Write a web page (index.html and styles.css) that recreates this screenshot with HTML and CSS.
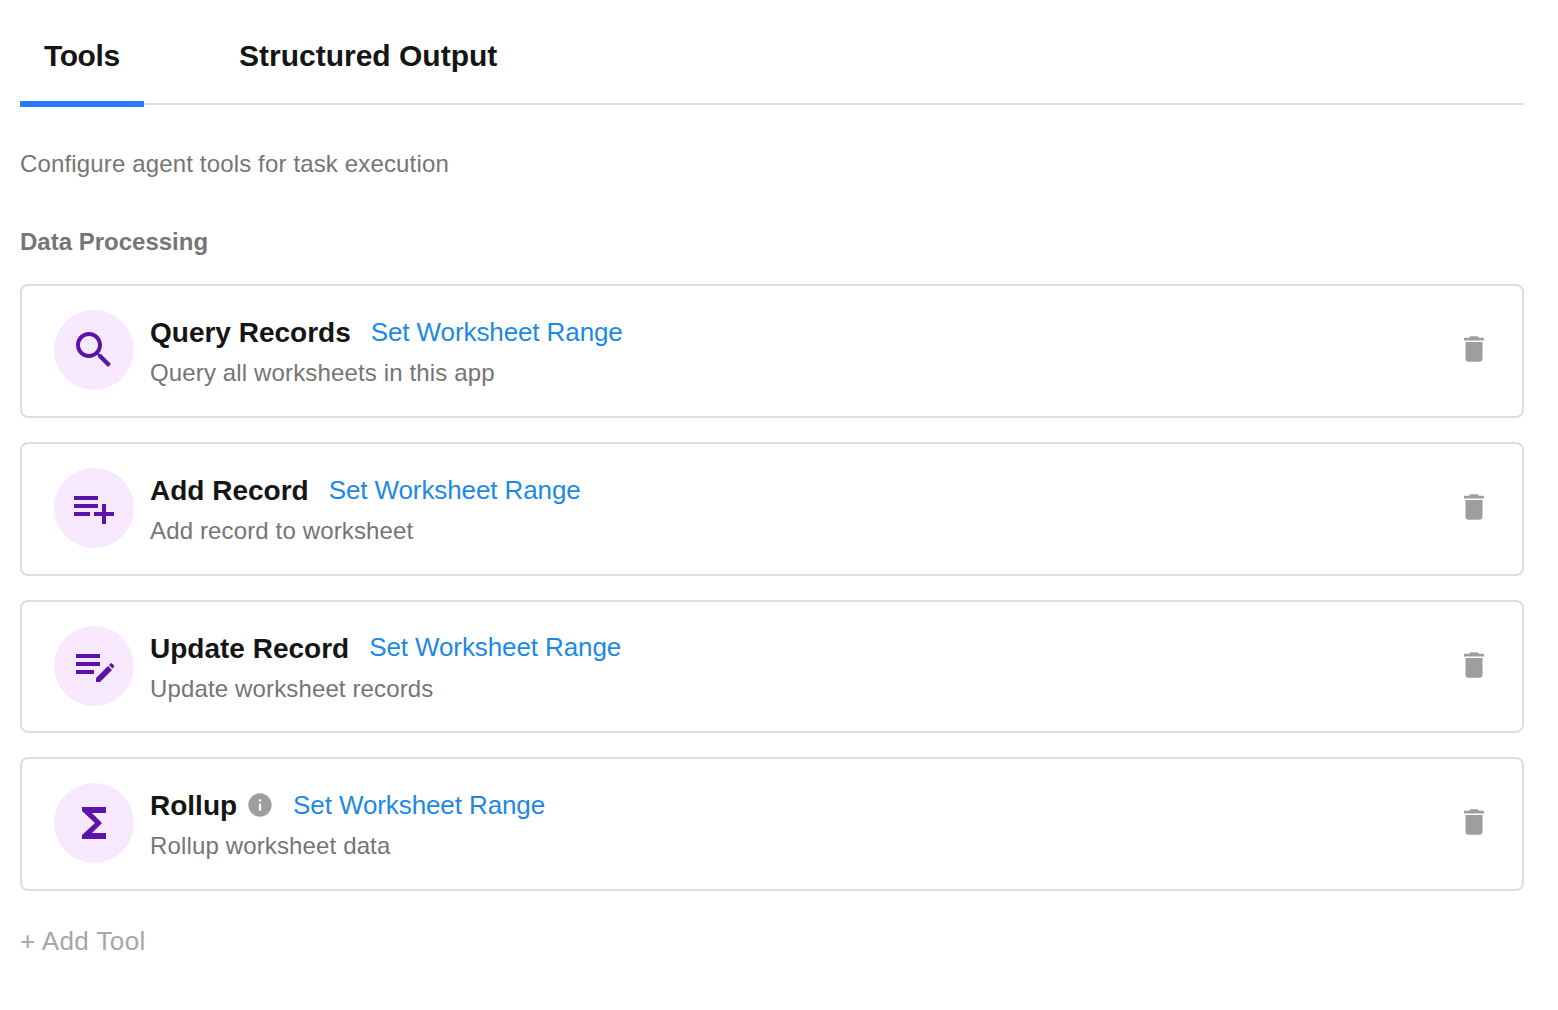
FILE: index.html
```html
<!DOCTYPE html>
<html lang="en">
  <head>
    <meta charset="UTF-8" />
    <title>Agent Tools</title>
    <link rel="stylesheet" href="styles.css">
  </head>
  <body>
    <div class="tabs">
      <div class="tab tab-active">Tools</div>
      <div class="tab">Structured Output</div>
    </div>

    <p class="intro">Configure agent tools for task execution</p>
    <h2 class="group-title">Data Processing</h2>

    <div class="tool-list">
      <div class="tool-card">
        <div class="tool-icon">
          <svg viewBox="0 0 24 24"><path d="M15.5 14h-.79l-.28-.27C15.41 12.59 16 11.11 16 9.5 16 5.91 13.09 3 9.5 3S3 5.91 3 9.5 5.91 16 9.5 16c1.61 0 3.09-.59 4.23-1.57l.27.28v.79l5 4.99L20.49 19l-4.99-5zm-6 0C7.01 14 5 11.99 5 9.5S7.01 5 9.5 5 14 7.01 14 9.5 11.99 14 9.5 14z"/></svg>
        </div>
        <div class="tool-body">
          <div class="tool-head">
            <span class="tool-name">Query Records</span>
            <a class="tool-link">Set Worksheet Range</a>
          </div>
          <div class="tool-desc">Query all worksheets in this app</div>
        </div>
        <svg class="tool-delete" viewBox="0 0 24 24"><path d="M6 19c0 1.1.9 2 2 2h8c1.1 0 2-.9 2-2V7H6v12zM19 4h-3.5l-1-1h-5l-1 1H5v2h14V4z"/></svg>
      </div>

      <div class="tool-card">
        <div class="tool-icon">
          <svg viewBox="0 0 24 24"><path d="M14 10H2v2h12v-2zm0-4H2v2h12V6zm4 8v-4h-2v4h-4v2h4v4h2v-4h4v-2h-4zM2 16h8v-2H2v2z"/></svg>
        </div>
        <div class="tool-body">
          <div class="tool-head">
            <span class="tool-name">Add Record</span>
            <a class="tool-link">Set Worksheet Range</a>
          </div>
          <div class="tool-desc">Add record to worksheet</div>
        </div>
        <svg class="tool-delete" viewBox="0 0 24 24"><path d="M6 19c0 1.1.9 2 2 2h8c1.1 0 2-.9 2-2V7H6v12zM19 4h-3.5l-1-1h-5l-1 1H5v2h14V4z"/></svg>
      </div>

      <div class="tool-card">
        <div class="tool-icon">
          <svg viewBox="0 0 48 48"><path d="M6 12h24v4H6zM6 20h24v4H6zM6 28h18v4H6zM26 40v-4l12-12 4 4-12 12zM39 23l1.6-1.6a1 1 0 0 1 1.4 0l2 2a1 1 0 0 1 0 1.4L42.4 26.4z"/></svg>
        </div>
        <div class="tool-body">
          <div class="tool-head">
            <span class="tool-name">Update Record</span>
            <a class="tool-link">Set Worksheet Range</a>
          </div>
          <div class="tool-desc">Update worksheet records</div>
        </div>
        <svg class="tool-delete" viewBox="0 0 24 24"><path d="M6 19c0 1.1.9 2 2 2h8c1.1 0 2-.9 2-2V7H6v12zM19 4h-3.5l-1-1h-5l-1 1H5v2h14V4z"/></svg>
      </div>

      <div class="tool-card">
        <div class="tool-icon">
          <svg viewBox="0 0 24 24"><path d="M18 4H6v2l6.5 6L6 18v2h12v-3h-7l5-5-5-5h7z"/></svg>
        </div>
        <div class="tool-body">
          <div class="tool-head">
            <span class="tool-name">Rollup</span>
            <svg class="tool-info" viewBox="0 0 24 24"><path d="M12 2C6.48 2 2 6.48 2 12s4.48 10 10 10 10-4.48 10-10S17.52 2 12 2zm1 15h-2v-6h2v6zm0-8h-2V7h2v2z"/></svg>
            <a class="tool-link">Set Worksheet Range</a>
          </div>
          <div class="tool-desc">Rollup worksheet data</div>
        </div>
        <svg class="tool-delete" viewBox="0 0 24 24"><path d="M6 19c0 1.1.9 2 2 2h8c1.1 0 2-.9 2-2V7H6v12zM19 4h-3.5l-1-1h-5l-1 1H5v2h14V4z"/></svg>
      </div>
    </div>

    <div class="add-tool">+ Add Tool</div>
  </body>
</html>
```

FILE: styles.css
```css
body {
  margin: 0;
  padding: 0 34px 0 20px;
  font-family: "Liberation Sans", Arial, sans-serif;
  background-color: #fff;
  color: #151515;
}

/* Tabs */
.tabs {
  display: flex;
  gap: 71px;
  height: 105px;
  box-sizing: border-box;
  border-bottom: 2px solid #ddd;
}

.tab {
  height: 105px;
  box-sizing: border-box;
  padding: 0 24px;
  font-size: 30px;
  font-weight: bold;
  line-height: 112px;
}

.tab-active {
  width: 124px;
  height: 107px;
  margin-bottom: -2px;
  border-bottom: 6px solid #2979ff;
  letter-spacing: -0.4px;
}

.intro {
  margin: 44px 0 0;
  font-size: 24px;
  line-height: 30px;
  letter-spacing: 0.15px;
  color: #757575;
}

.group-title {
  margin: 48px 0 0;
  font-size: 24px;
  font-weight: bold;
  line-height: 30px;
  color: #757575;
}

/* Tool cards */
.tool-list {
  display: flex;
  flex-direction: column;
  gap: 24px;
  margin-top: 27.4px;
}

.tool-card {
  display: flex;
  align-items: center;
  height: 133.67px;
  box-sizing: border-box;
  padding: 0 31px 1.5px 32px;
  border: 2px solid #ddd;
  border-radius: 8px;
}

.tool-icon {
  display: flex;
  align-items: center;
  justify-content: center;
  width: 80px;
  height: 80px;
  border-radius: 50%;
  background-color: #f8e8fd;
}

.tool-icon svg {
  width: 48px;
  height: 48px;
  fill: #5c14a8;
}

.tool-body {
  flex: 1;
  margin: 4px 0 0 16px;
}

.tool-head {
  display: flex;
  align-items: center;
  height: 36px;
}

.tool-name {
  font-size: 28px;
  font-weight: bold;
}

.tool-link {
  margin: 0 0 2px 20px;
  font-size: 26px;
  letter-spacing: -0.1px;
  color: #1e88e5;
}

.tool-info {
  width: 28px;
  height: 28px;
  margin-left: 9px;
  margin-bottom: 2px;
  fill: #9e9e9e;
}

.tool-info + .tool-link {
  margin-left: 19px;
}

.tool-desc {
  margin-top: 6px;
  font-size: 24px;
  line-height: 32px;
  letter-spacing: 0.14px;
  color: #757575;
}

.tool-delete {
  width: 34px;
  height: 34px;
  margin-bottom: 2px;
  fill: #9e9e9e;
}

.add-tool {
  margin-top: 34px;
  font-size: 26px;
  line-height: 32px;
  letter-spacing: 0.4px;
  color: #a6a6a6;
}
```
